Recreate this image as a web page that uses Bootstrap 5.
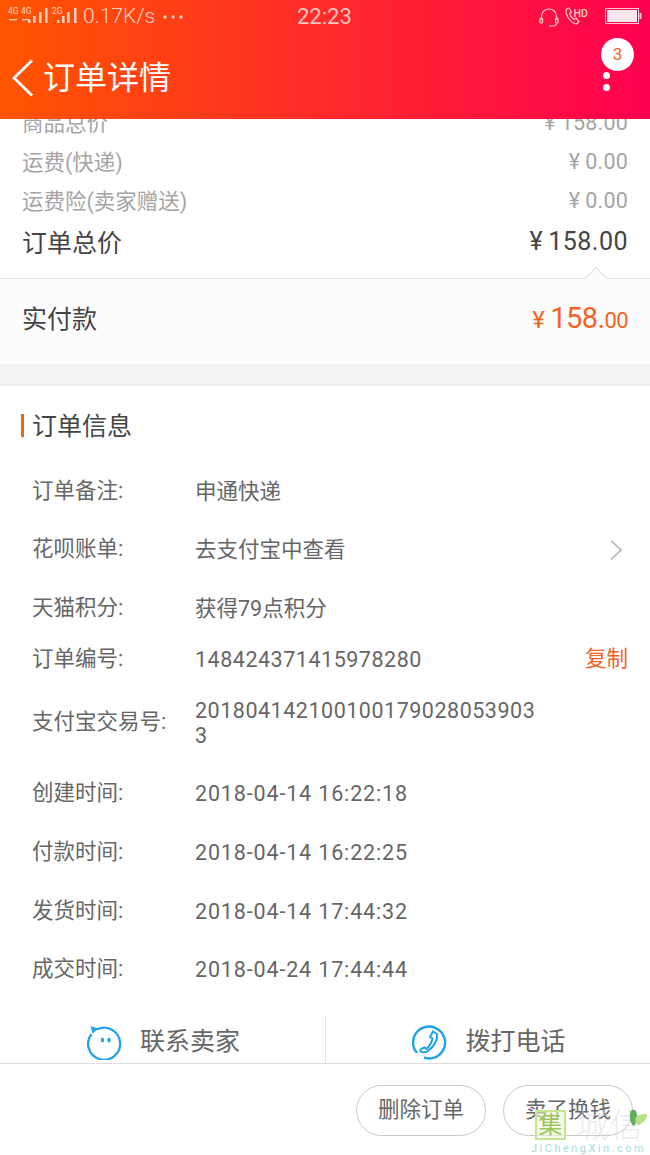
<!DOCTYPE html>
<html lang="zh-CN">
<head>
  <meta charset="UTF-8">
  <meta name="viewport" content="width=device-width, initial-scale=1">
  <title>订单详情</title>
  <link href="https://cdn.jsdelivr.net/npm/bootstrap@5.3.3/dist/css/bootstrap.min.css" rel="stylesheet">
  <style>
    html, body { height: 100%; }
    body { width: 650px; height: 1155px; overflow: hidden; background: #fff; color: #666; font-family: Roboto, "Noto Sans CJK SC", sans-serif; position: relative; }
    .app-head { height: 119px; background: linear-gradient(90deg, #ff5500 0%, #ff2a2a 50%, #ff0050 100%); color: #fff; position: relative; z-index: 2; }
    .status-line { height: 34px; padding: 0 8px 0 0; color: #ffd3c0; }
    .status-speed { font-size: 21px; margin-left: 3px; font-weight: 300; }
    .status-time { position: absolute; left: 297px; top: 4px; font-size: 22px; line-height: 26px; color: #ffc4c0; }
    .head-title { font-size: 32px; line-height: 40px; margin-left: 8px; }
    .back-row { height: 85px; padding: 2px 0 0 11px; }
    .msg-count { position: absolute; left: 601px; top: 38px; width: 33px; height: 33px; border-radius: 50%; background: #fff; color: #f0641e; font-size: 17px; line-height: 33px; text-align: center; }
    .more-dot { position: absolute; left: 603px; width: 7px; height: 7px; border-radius: 50%; background: #fff; }
    .price-rows { height: 159px; padding: 0 22px; overflow: hidden; position: relative; }
    .price-line { height: 39px; font-size: 21.5px; color: #a5a5a5; }
    .price-first { margin-top: -14px; }
    .price-total { height: 43px; font-size: 25px; color: #444; }
    .price-num { position: relative; top: -1px; letter-spacing: .2px; }
    .price-total .price-num { top: -2px; letter-spacing: .5px; }
    .yen-gap { margin-right: 5px; }
    .pay-box { height: 86px; padding: 0 22px 4px; background: #fcfcfc; border-top: 1px solid #dedede; position: relative; font-size: 25px; color: #444; }
    .pay-notch { position: absolute; right: 46px; top: -9px; width: 16px; height: 16px; background: #fcfcfc; border-left: 1px solid #dedede; border-top: 1px solid #dedede; transform: rotate(45deg); }
    .pay-num { color: #f2641f; font-size: 29px; line-height: 38px; letter-spacing: -.6px; }
    .pay-num small { font-size: 22px; }
    .pay-num .yen { font-size: 24px; margin-right: 6px; }
    .gap-band { height: 22px; background: #f2f2f2; }
    .info-head { height: 76px; padding: 6px 0 0 21px; font-size: 25px; color: #444; }
    .info-bar { width: 3px; height: 23px; background: #f0641e; margin-right: 8px; position: relative; top: -2px; }
    .info-line { padding-left: 32px; padding-right: 27px; font-size: 21.5px; color: #666; }
    .info-key { width: 163px; flex: none; }
    .info-val { flex: 1 1 auto; line-height: 25px; word-break: break-all; }
    .info-digits { letter-spacing: .52px; }
    .info-date { letter-spacing: .85px; }
    .info-wide { max-width: 346px; flex: 0 0 auto; width: 346px; }
    .copy-link { color: #f0641e; margin-right: -5px; margin-left: auto; }
    .contact-bar { height: 49px; border-bottom: 1px solid #dedede; font-size: 25px; color: #666; }
    .contact-cell { width: 50%; gap: 17px; padding: 5px 0 0 2px; }
    .contact-cell + .contact-cell { border-left: 1px solid #e4e4e4; }
    .action-bar { height: 92px; padding: 21px 17px 0 0; gap: 17px; }
    .pill-btn { width: 130px; height: 51px; border: 1px solid #c9c9c9; border-radius: 26px; background: #fff; color: #666; font-size: 21.5px; padding: 0; }
    .water-mark { position: absolute; left: 531px; top: 1107px; width: 119px; height: 48px; z-index: 3; }
    .wm-box { position: absolute; left: 4px; top: 3px; width: 31px; height: 30px; border: 2px solid #c4e58d; background: rgba(236, 248, 214, .55); color: #9ac65c; font-size: 24px; line-height: 26px; text-align: center; }
    .wm-word { position: absolute; left: 45px; top: 0; font-size: 33px; line-height: 38px; letter-spacing: 1px; color: rgba(214, 214, 222, .5); font-weight: 300; }
    .wm-url { position: absolute; left: 0; top: 35px; font-size: 11px; line-height: 14px; letter-spacing: 2.5px; color: #a7dcd4; white-space: nowrap; }
  </style>
</head>
<body>
  <header class="app-head">
    <div class="status-line d-flex align-items-center">
      <svg width="80" height="34" viewBox="0 0 80 34" fill="#ffd3c0">
        <text x="8" y="14" font-size="8.500" font-family="Roboto">4G</text>
        <text x="21" y="14" font-size="8.500" font-family="Roboto">4G</text>
        <rect x="9" y="19" width="8" height="1.300"/><rect x="22" y="19" width="8" height="1.300"/>
        <rect x="28" y="20" width="2.500" height="3"/><rect x="33" y="16" width="2.500" height="7"/><rect x="39" y="12" width="2.500" height="11"/><rect x="45" y="8" width="2.500" height="15"/>
        <text x="52" y="14" font-size="8.500" font-family="Roboto">2G</text>
        <rect x="57" y="20" width="2.500" height="3"/><rect x="62" y="16" width="2.500" height="7"/><rect x="67" y="12" width="2.500" height="11"/><rect x="74" y="8" width="2.500" height="15"/>
      </svg>
      <span class="status-speed">0.17K/s</span>
      <svg class="ms-2" width="20" height="6" viewBox="0 0 20 6" fill="#ffd3c0"><circle cx="2" cy="3" r="1.700"/><circle cx="10" cy="3" r="1.700"/><circle cx="18" cy="3" r="1.700"/></svg>
      <span class="status-time">22:23</span>
      <div class="ms-auto d-flex align-items-center">
        <svg width="20" height="20" viewBox="0 0 20 20" fill="none" stroke="#ffd3c0" stroke-width="1.200"><path d="M2.500 13V9.500a7.500 7.500 0 0 1 15 0V13"/><rect x="1" y="11" width="2.500" height="5" rx="1"/><rect x="16.500" y="11" width="2.500" height="5" rx="1"/><path d="M17.500 16.500q-.5 2.500-3 2.500H10"/></svg>
        <svg class="ms-1" width="26" height="20" viewBox="0 0 26 20" fill="none" stroke="#ffd3c0" stroke-width="1.200"><path d="M3 2.500l3-1.500 2.500 4-2 1.500q1 3.500 4.500 6l2-1.500 3 3.500-2.500 2.500Q9 16.500 5 10.500 2.500 6.500 3 2.500z"/><text x="10.500" y="10" font-size="10.500" font-weight="500" font-family="Roboto" fill="#ffd3c0" stroke="none">HD</text></svg>
        <svg class="ms-3" width="37" height="18" viewBox="0 0 37 18"><rect x=".5" y=".5" width="33" height="15" fill="none" stroke="#ffc8d0"/><rect x="2" y="2" width="30" height="12" fill="#ffe6ea"/><rect x="34.500" y="5" width="2" height="6" fill="#ffc8d0"/></svg>
      </div>
    </div>
    <div class="back-row d-flex align-items-center">
      <svg width="24" height="38" viewBox="0 0 24 38" fill="none" stroke="#fff" stroke-width="2.800"><path d="M21 1.500L3 19l18 17.500"/></svg>
      <span class="head-title">订单详情</span>
    </div>
    <span class="msg-count">3</span>
    <span class="more-dot" style="top:72px"></span>
    <span class="more-dot" style="top:84px"></span>
  </header>

  <main>
    <section class="price-rows">
      <div class="price-line price-first d-flex justify-content-between align-items-center"><span>商品总价</span><span class="price-num"><span class="yen-gap">¥</span>158.00</span></div>
      <div class="price-line d-flex justify-content-between align-items-center"><span>运费(快递)</span><span class="price-num"><span class="yen-gap">¥</span>0.00</span></div>
      <div class="price-line d-flex justify-content-between align-items-center"><span>运费险(卖家赠送)</span><span class="price-num"><span class="yen-gap">¥</span>0.00</span></div>
      <div class="price-total d-flex justify-content-between align-items-center"><span>订单总价</span><span class="price-num"><span class="yen-gap">¥</span>158.00</span></div>
    </section>
    <section class="pay-box d-flex justify-content-between align-items-center">
      <span class="pay-notch"></span>
      <span>实付款</span>
      <span class="pay-num"><span class="yen">¥</span>158.<small>00</small></span>
    </section>
    <div class="gap-band"></div>

    <section>
      <div class="info-head d-flex align-items-center"><span class="info-bar"></span>订单信息</div>
      <div class="info-line d-flex align-items-center" style="height:58px"><span class="info-key">订单备注:</span><span class="info-val">申通快递</span></div>
      <div class="info-line d-flex align-items-center" style="height:59px"><span class="info-key">花呗账单:</span><span class="info-val">去支付宝中查看</span>
        <svg width="14" height="22" viewBox="0 0 14 22" fill="none" stroke="#b5b5b5" stroke-width="1.700"><path d="M2 1.500L12 11 2 20.500"/></svg>
      </div>
      <div class="info-line d-flex align-items-center" style="height:58px"><span class="info-key">天猫积分:</span><span class="info-val">获得79点积分</span></div>
      <div class="info-line d-flex align-items-center" style="height:44px"><span class="info-key">订单编号:</span><span class="info-val info-digits">148424371415978280</span><span class="copy-link">复制</span></div>
      <div class="info-line d-flex align-items-center" style="height:83px"><span class="info-key">支付宝交易号:</span><span class="info-val info-digits info-wide">2018041421001001790280539033</span></div>
      <div class="info-line d-flex align-items-center" style="height:59px"><span class="info-key">创建时间:</span><span class="info-val info-date">2018-04-14 16:22:18</span></div>
      <div class="info-line d-flex align-items-center" style="height:59px"><span class="info-key">付款时间:</span><span class="info-val info-date">2018-04-14 16:22:25</span></div>
      <div class="info-line d-flex align-items-center" style="height:59px"><span class="info-key">发货时间:</span><span class="info-val info-date">2018-04-14 17:44:32</span></div>
      <div class="info-line d-flex align-items-center" style="height:57px"><span class="info-key">成交时间:</span><span class="info-val info-date">2018-04-24 17:44:44</span></div>
    </section>
  </main>

  <footer style="margin-top:17px">
    <div class="contact-bar d-flex">
      <div class="contact-cell d-flex align-items-center justify-content-center">
        <svg width="36" height="36" viewBox="0 0 36 36" fill="none" stroke="#22a3ea" stroke-width="2.300"><path d="M10 5.500A16 16 0 1 1 4.500 10"/><path d="M3.500 2l8 2.500-6 5z" fill="#22a3ea" stroke="none"/><ellipse cx="15.500" cy="16" rx="1.700" ry="2.500" fill="#22a3ea" stroke="none"/><ellipse cx="22" cy="16" rx="1.700" ry="2.500" fill="#22a3ea" stroke="none"/></svg>
        <span>联系卖家</span>
      </div>
      <div class="contact-cell d-flex align-items-center justify-content-center">
        <svg width="36" height="36" viewBox="0 0 36 36" fill="none" stroke="#22a3ea" stroke-width="2.500"><path d="M5 29A16 16 0 1 1 18 34.500q-3 0-6-1"/><path d="M21 7.500l4 2.500q1 9-9 17-3 2-6.500 1-2-1-.5-3l3.500-1.500 2 1.500q5-5 6-10.500l-2.500-1.500z" stroke-width="2"/></svg>
        <span>拨打电话</span>
      </div>
    </div>
    <div class="action-bar d-flex justify-content-end align-items-start">
      <button type="button" class="btn pill-btn">删除订单</button>
      <button type="button" class="btn pill-btn">卖了换钱</button>
    </div>
  </footer>

  <div class="water-mark">
    <span class="wm-box">集</span>
    <span class="wm-word">城信</span>
    <svg style="position:absolute;left:96px;top:0" width="22" height="22" viewBox="0 0 24 24"><path d="M4 4q8-4 7 10-1 5-4 7Q1 14 4 4z" fill="#5fae5a"/><path d="M9 12q6-6 13-4-1 8-9 12l-4-3z" fill="#b6e08c"/></svg>
    <span class="wm-url">JiChengXin.com</span>
  </div>

  <script src="https://cdn.jsdelivr.net/npm/bootstrap@5.3.3/dist/js/bootstrap.bundle.min.js"></script>
</body>
</html>
